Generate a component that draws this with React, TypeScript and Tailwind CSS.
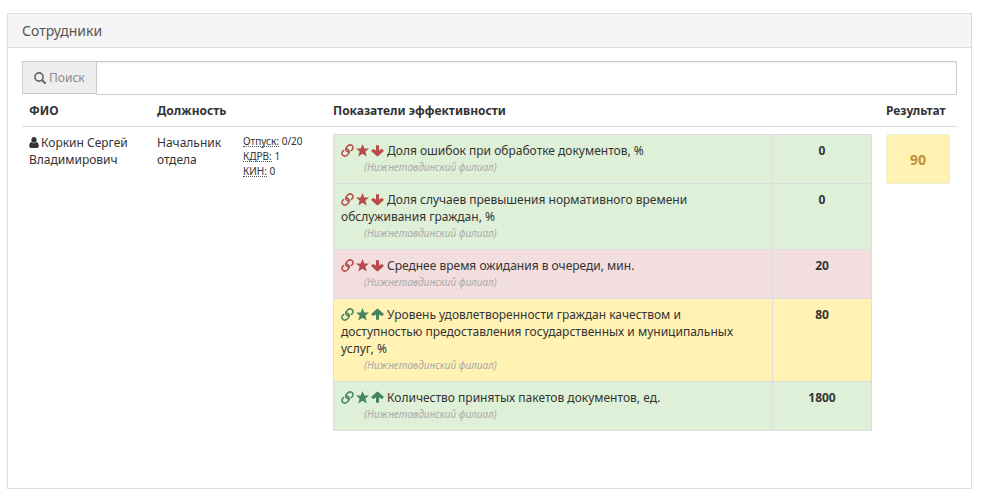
interface Indicator {
    name: string,
    branch: string,
    value: number,
    direction: "up" | "down",
    status: "success" | "danger" | "warning",
}

const rowColors = {
    success: "bg-[#dff0d8]",
    danger: "bg-[#f2dede]",
    warning: "bg-[#fff2b3]",
}

const SearchIcon = () => (
    <svg viewBox="0 0 12 12" className="w-[12px] h-[12px] text-[#666]" fill="none" stroke="currentColor" strokeWidth="1.6" strokeLinecap="round">
        <circle cx="5" cy="5" r="4.1" />
        <path d="M8.2 8.2 L11 11" strokeWidth="2" />
    </svg>
)

const UserIcon = () => (
    <svg viewBox="0 0 10 11" className="inline w-[10px] h-[11px] mr-[2px] align-[-1px]" fill="currentColor">
        <ellipse cx="5" cy="2.9" rx="2.6" ry="2.9" />
        <path d="M2.3 4.9 Q5 7.6 7.7 4.9 Q9.8 5.6 9.8 9 Q9.8 11 8 11 H2 Q.2 11 .2 9 Q.2 5.6 2.3 4.9 Z" />
    </svg>
)

const LinkIcon = () => (
    <svg viewBox="0 0 13 13" className="w-[13px] h-[13px]" fill="none" stroke="currentColor" strokeWidth="1.5" strokeLinecap="round" strokeLinejoin="round">
        <path d="M7.6 7.9 Q5.9 7.6 5 6.4 Q4.2 5 5.2 3.7 L7 1.8 Q8.8 .2 10.8 1.4 Q12.8 3 11.7 5 L10.4 6.5" />
        <path d="M5.4 5.1 Q7.1 5.4 8 6.6 Q8.8 8 7.8 9.3 L6 11.2 Q4.2 12.8 2.2 11.6 Q.2 10 1.3 8 L2.6 6.5" />
    </svg>
)

const StarIcon = () => (
    <svg viewBox="0 0 13 13" className="w-[13px] h-[13px]" fill="currentColor">
        <path d="M6.5 0 L8.3 4.4 L13 4.6 L9.4 7.6 L10.7 12.4 L6.5 9.7 L2.3 12.4 L3.6 7.6 L0 4.6 L4.7 4.4 Z" />
    </svg>
)

const ArrowIcon = ({ direction }: { direction: "up" | "down" }) => (
    <svg viewBox="0 0 13 13" className={direction === "up" ? "w-[13px] h-[13px] rotate-180" : "w-[13px] h-[13px]"} fill="currentColor">
        <path d="M5 1.3 H8 V6.4 L10.8 4.9 L12.6 6.3 V7.2 L7 12.3 H6 L.4 7.2 V6.3 L2.2 4.9 L5 6.4 Z" />
    </svg>
)

const IndicatorRow = ({ name, branch, value, direction, status }: Indicator) => {
    return (
        <tr className={rowColors[status]}>
            <td className="border border-[#ddd] p-[7px] align-top">
                <span className={`inline-flex gap-[2px] mr-[3px] align-[-2px] ${direction === "up" ? "text-[#44855f]" : "text-[#b94a48]"}`}>
                    <a href="#" aria-label={name}><LinkIcon /></a>
                    <StarIcon />
                    <ArrowIcon direction={direction} />
                </span>
                {name}
                <div className="pl-[23px] text-[10px] leading-[17px] italic text-[#aaa]">({branch})</div>
            </td>
            <td className="w-[99px] border border-[#ddd] p-[7px] align-top text-center font-bold">{value}</td>
        </tr>
    )
}

const Stat = ({ label, value }: { label: string, value: string }) => (
    <div>
        <abbr className="inline-block h-[13px] border-b border-dotted border-[#555] no-underline">{label}:</abbr> {value}
    </div>
)

export default function App() {
    return (
        <main className="pt-[13px] pl-[7px] pr-[11px] font-['Noto_Sans',sans-serif] text-[12px] leading-[17px] text-[#333]">
            <section className="border border-[#ddd] bg-white shadow-[0_1px_1px_rgba(0,0,0,0.05)]">
                {/* header */}
                <h3 className="border-b border-[#ddd] bg-[#f5f5f5] px-[14px] py-2 text-[14px] leading-[17px] text-[#555]">Сотрудники</h3>
                <div className="px-[14px] pt-[13px] pb-[50px]">
                    {/* search */}
                    <div className="flex items-start">
                        <label htmlFor="search" className="flex h-[33px] items-center gap-[3px] border border-r-0 border-[#ccc] bg-[#eee] px-[11px] text-[#888]">
                            <SearchIcon />
                            Поиск
                        </label>
                        <input id="search" type="text" className="h-[34px] min-w-0 flex-1 border border-[#ccc] px-3 shadow-[inset_0_1px_1px_rgba(0,0,0,0.075)] outline-none" />
                    </div>
                    {/* employees */}
                    <table className="w-full table-fixed border-separate border-spacing-0">
                        <colgroup>
                            <col className="w-[128px]" />
                            <col className="w-[86px]" />
                            <col className="w-[90px]" />
                            <col />
                            <col className="w-[78px]" />
                        </colgroup>
                        <thead>
                            <tr className="text-left">
                                <th className="border-b border-[#ddd] p-[7px]">ФИО</th>
                                <th className="border-b border-[#ddd] p-[7px]" colSpan={2}>Должность</th>
                                <th className="border-b border-[#ddd] p-[7px]">Показатели эффективности</th>
                                <th className="border-b border-[#ddd] p-[7px]">Результат</th>
                            </tr>
                        </thead>
                        <tbody>
                            <tr className="align-top">
                                <td className="p-[7px]">
                                    <UserIcon />
                                    Коркин Сергей Владимирович
                                </td>
                                <td className="p-[7px]">Начальник отдела</td>
                                <td className="p-[7px] text-[10px] leading-[15px]">
                                    <Stat label="Отпуск" value="0/20" />
                                    <Stat label="КДРВ" value="1" />
                                    <Stat label="КИН" value="0" />
                                </td>
                                <td className="p-[7px]">
                                    <table className="w-full border-collapse">
                                        <tbody>
                                            {indicators.map((item) => (
                                                <IndicatorRow key={item.name} {...item} />
                                            ))}
                                        </tbody>
                                    </table>
                                </td>
                                <td className="p-[7px]">
                                    <div className="flex h-[50px] items-center justify-center rounded-[3px] border border-[#e6efcf] bg-[#fff2b3] text-[14px] font-bold text-[#c09040]">90</div>
                                </td>
                            </tr>
                        </tbody>
                    </table>
                </div>
            </section>
        </main>
    )
}

const indicators: Indicator[] = [
    {
        name: "Доля ошибок при обработке документов, %",
        branch: "Нижнетавдинский филиал",
        value: 0,
        direction: "down",
        status: "success",
    },
    {
        name: "Доля случаев превышения нормативного времени обслуживания граждан, %",
        branch: "Нижнетавдинский филиал",
        value: 0,
        direction: "down",
        status: "success",
    },
    {
        name: "Среднее время ожидания в очереди, мин.",
        branch: "Нижнетавдинский филиал",
        value: 20,
        direction: "down",
        status: "danger",
    },
    {
        name: "Уровень удовлетворенности граждан качеством и доступностью предоставления государственных и муниципальных услуг, %",
        branch: "Нижнетавдинский филиал",
        value: 80,
        direction: "up",
        status: "warning",
    },
    {
        name: "Количество принятых пакетов документов, ед.",
        branch: "Нижнетавдинский филиал",
        value: 1800,
        direction: "up",
        status: "success",
    },
]
